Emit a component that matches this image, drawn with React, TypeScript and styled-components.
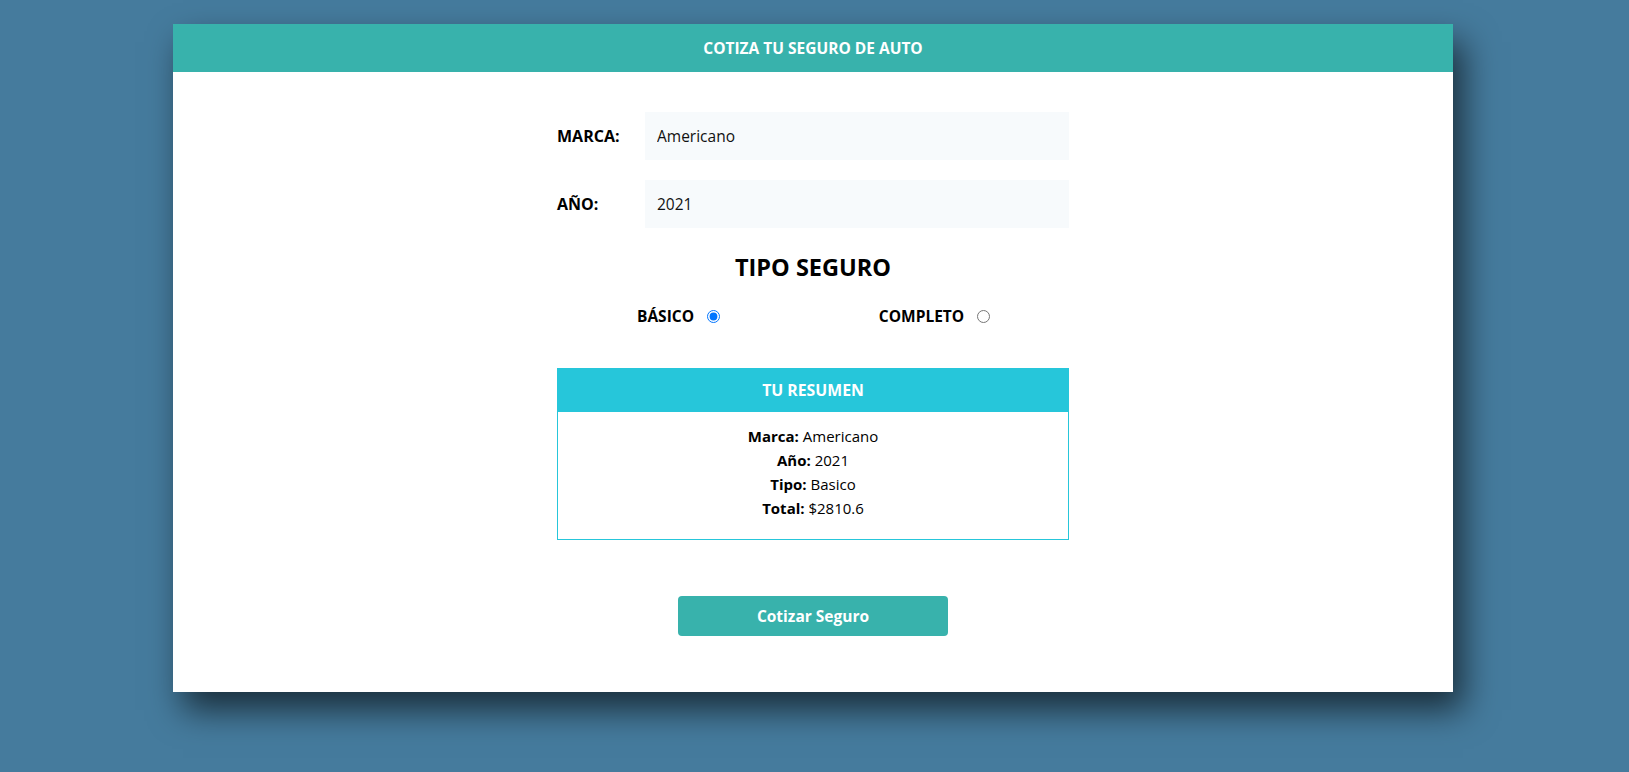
import React, { useState } from "react";
import styled, { createGlobalStyle } from "styled-components";

const GlobalStyle = createGlobalStyle`
  html, body {
    margin: 0;
    padding: 0;
    background: #457b9d;
    font-family: "Open Sans", "Noto Sans", sans-serif;
  }
  * { box-sizing: border-box; }
`;

const Page = styled.div`
  min-height: 772px;
  padding: 24px 3px 0 0;
  display: flex;
  justify-content: center;
  align-items: flex-start;
`;

const Card = styled.div`
  width: 1280px;
  background: #ffffff;
  box-shadow: 10px 18px 32px rgba(0, 0, 0, 0.62);
`;

const Header = styled.header`
  height: 48px;
  background: #38b2ac;
  color: #ffffff;
  display: flex;
  align-items: center;
  justify-content: center;
  font-size: 15.5px;
  font-weight: 700;
  text-transform: uppercase;
`;

const Body = styled.div`
  display: flex;
  justify-content: center;
  padding: 40px 0 56px;
`;

const Form = styled.form`
  width: 512px;
  display: flex;
  flex-direction: column;
`;

const Row = styled.div`
  display: flex;
  align-items: center;
  & + & { margin-top: 20px; }
`;

const Label = styled.label`
  flex: 0 0 88px;
  font-size: 16px;
  font-weight: 700;
  text-transform: uppercase;
  color: #000;
`;

const Field = styled.input`
  flex: 1;
  min-width: 0;
  height: 48px;
  border: none;
  outline: none;
  background: #f7fafc;
  padding: 0 12px;
  font-family: inherit;
  font-size: 15.5px;
  color: #111;
`;

const Title = styled.h2`
  margin: 23px 0 0;
  line-height: 32px;
  font-size: 23.5px;
  font-weight: 700;
  text-align: center;
  color: #000;
`;

const RadioRow = styled.div`
  margin-top: 21px;
  display: flex;
  height: 24px;
`;

const RadioGroup = styled.label`
  flex: 1;
  display: flex;
  align-items: center;
  justify-content: center;
  line-height: 24px;
  font-size: 15.5px;
  font-weight: 700;
  text-transform: uppercase;
  color: #000;
`;

const Radio = styled.input`
  width: 13px;
  height: 13px;
  margin: 0 13px 0 13px;
`;

const Summary = styled.div`
  margin-top: 40px;
  border: 1px solid #26c6da;
  text-align: center;
`;

const SummaryHeader = styled.div`
  height: 44px;
  margin: -1px -1px 0;
  background: #26c6da;
  color: #fff;
  display: flex;
  align-items: center;
  justify-content: center;
  font-size: 15.8px;
  font-weight: 700;
  text-transform: uppercase;
`;

const SummaryBody = styled.div`
  padding: 12px 0 19px;
  font-size: 15px;
  line-height: 24px;
  color: #000;
`;

const Line = styled.p`
  margin: 0;
`;

const Button = styled.button`
  align-self: center;
  margin-top: 56px;
  width: 270px;
  height: 40px;
  border: none;
  border-radius: 4px;
  background: #38b2ac;
  color: #fff;
  font-family: inherit;
  font-size: 15.5px;
  font-weight: 700;
  cursor: pointer;
`;

export default function App() {
  const [tipo, setTipo] = useState("basico");
  return (
    <>
      <GlobalStyle />
      <Page>
        <Card>
          <Header>Cotiza tu seguro de auto</Header>
          <Body>
            <Form onSubmit={(e) => e.preventDefault()}>
              <Row>
                <Label>Marca:</Label>
                <Field defaultValue="Americano" />
              </Row>
              <Row>
                <Label>Año:</Label>
                <Field defaultValue="2021" />
              </Row>
              <Title>TIPO SEGURO</Title>
              <RadioRow>
                <RadioGroup>
                  Básico
                  <Radio
                    type="radio"
                    name="tipo"
                    checked={tipo === "basico"}
                    onChange={() => setTipo("basico")}
                  />
                </RadioGroup>
                <RadioGroup>
                  Completo
                  <Radio
                    type="radio"
                    name="tipo"
                    checked={tipo === "completo"}
                    onChange={() => setTipo("completo")}
                  />
                </RadioGroup>
              </RadioRow>
              <Summary>
                <SummaryHeader>Tu resumen</SummaryHeader>
                <SummaryBody>
                  <Line><b>Marca:</b> Americano</Line>
                  <Line><b>Año:</b> 2021</Line>
                  <Line><b>Tipo:</b> Basico</Line>
                  <Line><b>Total:</b> $2810.6</Line>
                </SummaryBody>
              </Summary>
              <Button type="submit">Cotizar Seguro</Button>
            </Form>
          </Body>
        </Card>
      </Page>
    </>
  );
}
